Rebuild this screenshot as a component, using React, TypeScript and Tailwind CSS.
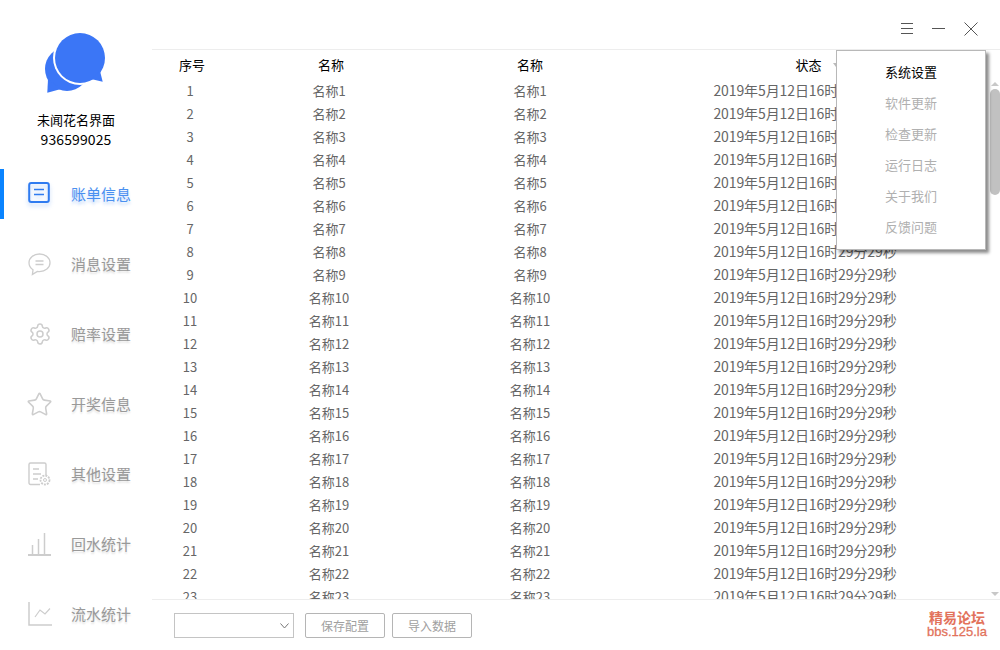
import { Settings, Star } from 'lucide-react';
import type { ReactNode } from 'react';

const FONT = "font-['Noto_Sans_CJK_SC','Microsoft_YaHei',sans-serif]";
const ICON_GRAY = '#cdcdcd';

const ROWS = Array.from({ length: 23 }, (_, i) => i + 1);
const MENU = ['软件更新', '检查更新', '运行日志', '关于我们', '反馈问题'];

function LogoIcon() {
  return (
    <svg width="60" height="61" viewBox="0 0 60 61">
      <circle cx="22" cy="36" r="22" fill="#3b76f6" />
      <path d="M3 46 L2.3 59.7 L16 56 Z" fill="#3b76f6" />
      <circle cx="35" cy="25" r="27" fill="#ffffff" />
      <circle cx="35" cy="25" r="25" fill="#3b76f6" />
      <path d="M55 38 L57.7 48.7 L46 46 Z" fill="#3b76f6" />
    </svg>
  );
}

function BillIcon() {
  return (
    <svg width="22" height="26" viewBox="0 0 22 26" className="drop-shadow-[0_3px_2px_rgba(47,123,240,0.3)]">
      <rect x="1.2" y="2" width="19.6" height="19" rx="2" fill="none" stroke="#2f7bf0" strokeWidth="2" />
      <path d="M6 8.5H16M6 13.5H16" stroke="#2f7bf0" strokeWidth="1.6" />
    </svg>
  );
}

function MessageIcon() {
  return (
    <svg width="23" height="23" viewBox="0 0 23 23" fill="none" stroke={ICON_GRAY} strokeWidth="1.3">
      <path d="M11.5 1C5.7 1 1 4.6 1 9.8c0 3 1.6 5.4 4 7l-.6 4.6 5-3c.7.1 1.4.2 2.1.2 5.8 0 10.5-3.7 10.5-8.8S17.3 1 11.5 1z" />
      <path d="M7.5 8H15.5M7.5 11.5H15.5" />
    </svg>
  );
}

function OtherIcon() {
  return (
    <svg width="23" height="24" viewBox="0 0 23 24" fill="none" stroke={ICON_GRAY} strokeWidth="1.4">
      <path d="M12 22.5H2.5a1.5 1.5 0 0 1-1.5-1.5V2.5A1.5 1.5 0 0 1 2.5 1h14a1.5 1.5 0 0 1 1.5 1.5V13" />
      <path d="M5 7H11M5 12H13M5 17H10" />
      <circle cx="17" cy="18" r="4.5" strokeWidth="1.8" strokeDasharray="2 1" />
      <circle cx="17" cy="18" r="1.5" strokeWidth="1" />
    </svg>
  );
}

function BarsIcon() {
  return (
    <svg width="23" height="23" viewBox="0 0 23 23" fill="none" stroke={ICON_GRAY} strokeWidth="1.5">
      <path d="M0 22H23" strokeWidth="2" />
      <path d="M4.5 12V21M10.5 6V21M16.5 0V21" />
    </svg>
  );
}

function LineIcon() {
  return (
    <svg width="24" height="24" viewBox="0 0 24 24" fill="none" stroke={ICON_GRAY} strokeWidth="1.5">
      <path d="M1 0V23H24" />
      <path d="M7 15L12 8L17 12L22 6.5" strokeWidth="1.2" />
    </svg>
  );
}

function NavItem({ icon, label, active }: { icon: ReactNode; label: string; active?: boolean }) {
  return (
    <div className="relative flex h-[50px] items-center pl-[28px]">
      {active && <div className="absolute left-0 top-0 h-[50px] w-[4px] bg-[#0a84ff]" />}
      <div className="flex w-[43px] shrink-0 justify-start">{icon}</div>
      <span
        className={
          active
            ? 'text-[15px] text-[#4a90f0] [text-shadow:0_3px_3px_rgba(47,123,240,0.3)]'
            : 'text-[15px] text-[#999999] [text-shadow:0_2px_2px_rgba(0,0,0,0.12)]'
        }
      >
        {label}
      </span>
    </div>
  );
}

function Sidebar() {
  return (
    <aside className="flex w-[152px] shrink-0 flex-col">
      <div className="flex flex-col items-center pt-[33px]">
        <div className="-ml-[3px]">
          <LogoIcon />
        </div>
        <div className="mt-[16px] text-[13px] leading-[20px] text-black">未闻花名界面</div>
        <div className="text-[14px] leading-[19px] tracking-[0.1px] text-black">936599025</div>
      </div>
      <nav className="mt-[20px] flex flex-col gap-[20px]">
        <NavItem active icon={<BillIcon />} label="账单信息" />
        <NavItem icon={<MessageIcon />} label="消息设置" />
        <NavItem icon={<Settings size={24} color={ICON_GRAY} strokeWidth={1.5} />} label="赔率设置" />
        <NavItem icon={<Star size={27} color={ICON_GRAY} strokeWidth={1.4} className="-ml-[2px]" />} label="开奖信息" />
        <NavItem icon={<OtherIcon />} label="其他设置" />
        <NavItem icon={<BarsIcon />} label="回水统计" />
        <NavItem icon={<LineIcon />} label="流水统计" />
      </nav>
    </aside>
  );
}

function TitleBar() {
  return (
    <div className="flex h-[50px] shrink-0 items-start justify-end gap-[19px] border-b border-[#ededed] pr-[22px] pt-[22px]">
      <svg width="12" height="13" viewBox="0 0 12 13" stroke="#555" strokeWidth="1">
        <path d="M0 1.5H12M0 6.5H12M0 11.5H12" />
      </svg>
      <svg width="13" height="13" viewBox="0 0 13 13" stroke="#555" strokeWidth="1">
        <path d="M0 6.5H13" />
      </svg>
      <svg width="14" height="14" viewBox="0 0 14 14" stroke="#555" strokeWidth="1">
        <path d="M0.5 0.5L13.5 13.5M13.5 0.5L0.5 13.5" />
      </svg>
    </div>
  );
}

function DropdownMenu() {
  return (
    <div className="absolute left-[684px] top-[50px] z-10 flex h-[200px] w-[150px] flex-col border border-[#b8b8b8] bg-white py-[5px] shadow-[3px_3px_3px_rgba(0,0,0,0.45)]">
      <div className="flex h-[31px] items-center justify-center text-[13px] text-black">系统设置</div>
      {MENU.map((m) => (
        <div key={m} className="flex h-[31px] items-center justify-center text-[13px] text-[#b0b0b0]">
          {m}
        </div>
      ))}
    </div>
  );
}

function Scrollbar() {
  return (
    <div className="flex w-[10px] shrink-0 flex-col items-center pb-[3px]">
      <div className="mt-[3px] h-0 w-0 border-x-[4px] border-b-[4px] border-x-transparent border-b-[#c8c8c8]" />
      <div className="mt-[3px] h-[106px] w-[10px] rounded-[5px] bg-[#c1c1c1]" />
      <div className="mt-auto h-0 w-0 border-x-[4px] border-t-[4px] border-x-transparent border-t-[#c8c8c8]" />
    </div>
  );
}

function Table() {
  return (
    <div className="flex min-h-0 flex-1 flex-col">
      <div className="grid h-[29px] shrink-0 grid-cols-[76px_204px_196px_354px] items-center text-center text-[13px] text-black">
        <div className="pl-[4px]">序号</div>
        <div className="pl-[2px]">名称</div>
        <div>名称</div>
        <div className="flex items-center justify-center pl-[24px]">
          <span>状态</span>
          <span className="ml-[11px] h-0 w-0 border-x-[3px] border-t-[4px] border-x-transparent border-t-[#bbbbbb]" />
        </div>
      </div>
      <div className="flex min-h-0 flex-1">
        <div className="min-w-0 flex-1 overflow-hidden">
          {ROWS.map((n) => (
            <div
              key={n}
              className="grid h-[23px] grid-cols-[76px_204px_196px_354px] items-center text-center text-[13px] text-[#666666]"
            >
              <div>{n}</div>
              <div className="pr-[2px]">名称{n}</div>
              <div>名称{n}</div>
              <div className="text-[14px] tracking-[-0.1px]">2019年5月12日16时29分29秒</div>
            </div>
          ))}
        </div>
        <Scrollbar />
      </div>
    </div>
  );
}

function Footer() {
  return (
    <div className="flex h-[51px] shrink-0 items-start border-t border-[#ededed] pl-[22px] pt-[13px]">
      <div className="flex h-[25px] w-[120px] items-center justify-end border border-[#c4c4c4] pr-[4px]">
        <svg width="9" height="6" viewBox="0 0 9 6" fill="none" stroke="#777" strokeWidth="1">
          <path d="M0.5 0.5L4.5 5L8.5 0.5" />
        </svg>
      </div>
      <button className="ml-[11px] h-[25px] w-[80px] rounded-[2px] border border-[#b5b5b5] text-[12px] text-[#a0a0a0]">
        保存配置
      </button>
      <button className="ml-[7px] h-[25px] w-[80px] rounded-[2px] border border-[#b5b5b5] text-[12px] text-[#a0a0a0]">
        导入数据
      </button>
      <div className="ml-auto mr-[13px] mt-[-3px] flex flex-col items-center text-[#e2725b]">
        <span className="text-[14px] font-bold leading-[15px]">精易论坛</span>
        <span className="font-['Liberation_Sans',sans-serif] text-[13px] leading-[13px] [-webkit-text-stroke:0.3px_#e2725b]">bbs.125.la</span>
      </div>
    </div>
  );
}

export default function App() {
  return (
    <div className={`flex h-[650px] w-[1000px] overflow-hidden bg-white ${FONT}`}>
      <Sidebar />
      <main className="relative flex min-w-0 flex-1 flex-col">
        <TitleBar />
        <DropdownMenu />
        <Table />
        <Footer />
      </main>
    </div>
  );
}
